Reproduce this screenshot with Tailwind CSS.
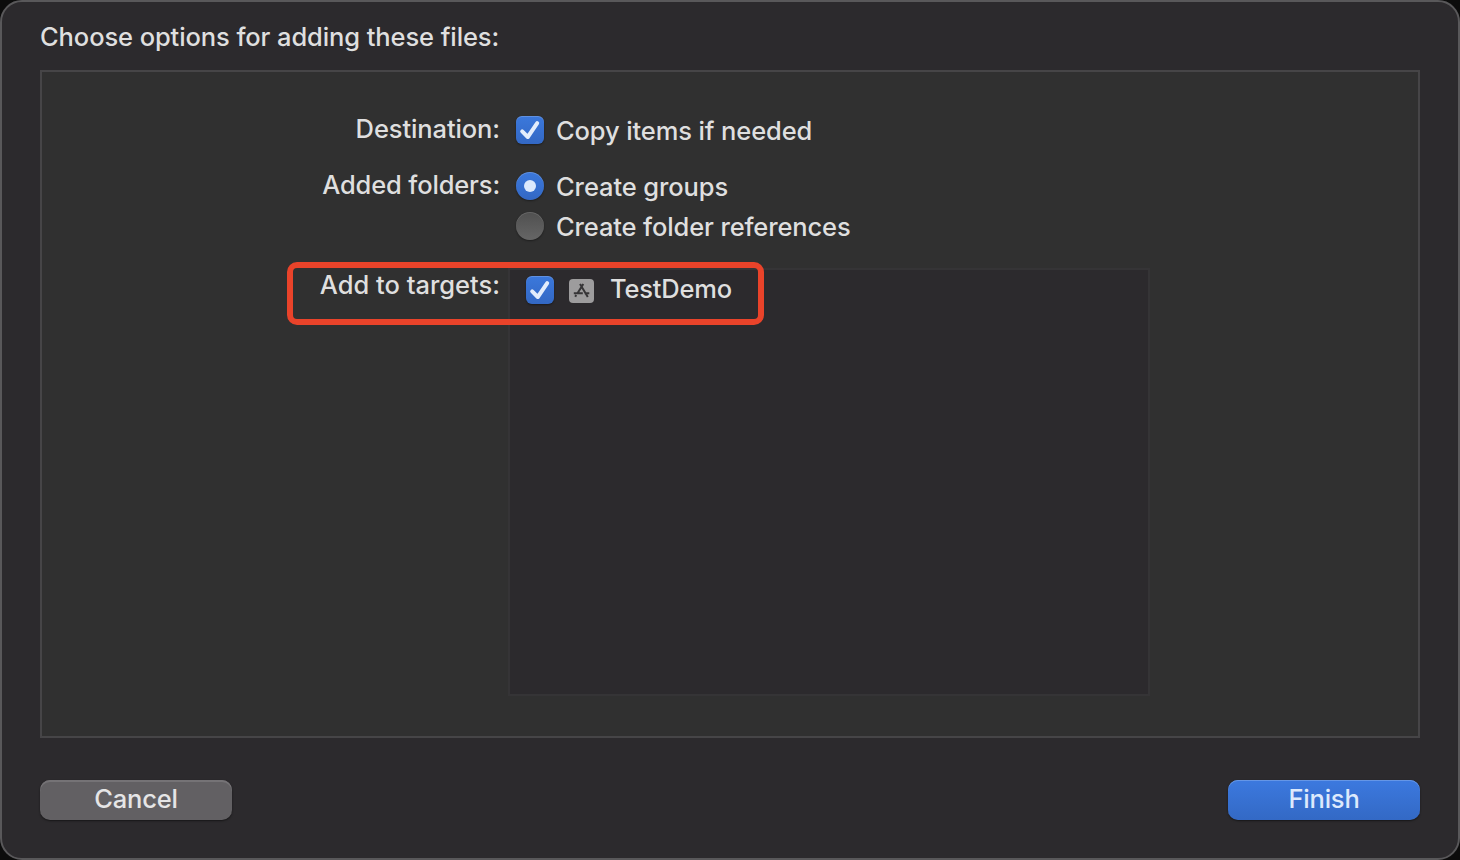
<!DOCTYPE html>
<html lang="en">
<head>
<meta charset="utf-8">
<title>Choose options for adding these files</title>
<script src="https://cdn.jsdelivr.net/npm/@tailwindcss/browser@4"></script>
</head>
<body class="w-[1460px] h-[860px] overflow-hidden bg-[#0c0c0c] font-['Inter',sans-serif] font-[450] text-[25.5px] leading-[40px] text-[#dfdfdf] whitespace-nowrap">
<main class="relative w-full h-full flex flex-col rounded-[22px] border-2 border-[#59585a] bg-[#2c2a2d] px-[38px]">
  <h1 class="mt-[15px] h-[40px] font-[450]"><span class="tracking-[-0.1px]">Choose options for adding these files:</span></h1>
  <section class="mt-[13px] h-[668px] border-2 border-[#464547] bg-[#303030] pt-[38px]">
    <div class="flex h-[40px]">
      <div class="w-[458px] -mt-[1px] text-right"><span class="tracking-[-0.1px]">Destination:</span></div>
      <label class="ml-[16px] flex items-center">
        <svg class="w-7 h-7 rounded-[6px] bg-linear-to-b from-[#3b78dc] to-[#3368c4] shadow-[0_1px_2px_#00000066,inset_0_1px_0_#ffffff30]" viewBox="0 0 28 28" fill="none"><path d="M6.2 15.4l5.6 5.6L21.2 7.2" stroke="#e3edfc" stroke-width="4" stroke-linecap="round" stroke-linejoin="round"/></svg>
        <span class="ml-3 mt-[2px] tracking-[-0.12px]">Copy items if needed</span>
      </label>
    </div>
    <div class="mt-4 flex h-[40px]">
      <div class="w-[458px] -mt-[1px] text-right"><span class="tracking-[-0.15px]">Added folders:</span></div>
      <label class="ml-[16px] flex items-center">
        <i class="w-7 h-7 rounded-full flex items-center justify-center bg-linear-to-b from-[#3b78dc] to-[#3368c4] shadow-[0_1px_2px_#00000066,inset_0_1px_0_#ffffff30]"><b class="w-3 h-3 rounded-full bg-[#dce9fc]"></b></i>
        <span class="ml-3 mt-[2px] tracking-[-0.1px]">Create groups</span>
      </label>
    </div>
    <div class="flex h-[40px] pl-[474px]">
      <label class="flex items-center">
        <i class="w-7 h-7 rounded-full bg-linear-to-b from-[#505050] to-[#666666] shadow-[0_1px_2px_#00000066,inset_0_1px_0_#ffffff20]"></i>
        <span class="ml-3 mt-[2px] tracking-[-0.13px]">Create folder references</span>
      </label>
    </div>
    <div class="mt-[22px] flex">
      <div class="w-[458px] -mt-[3px] text-right"><span class="tracking-[0px]">Add to targets:</span></div>
      <div class="ml-[8px] w-[642px] h-[428px] border-2 border-[#353436] bg-[#2c2a2d]">
        <div class="flex items-center h-[40px] pl-4">
          <svg class="w-7 h-7 rounded-[6px] bg-linear-to-b from-[#3b78dc] to-[#3368c4] shadow-[0_1px_2px_#00000066,inset_0_1px_0_#ffffff30]" viewBox="0 0 28 28" fill="none"><path d="M6.2 15.4l5.6 5.6L21.2 7.2" stroke="#e3edfc" stroke-width="4" stroke-linecap="round" stroke-linejoin="round"/></svg>
          <svg class="ml-[15px] mt-[2px] w-[25px] h-[24px]" viewBox="0 0 25 24" fill="none" stroke="#363537" stroke-width="2"><rect width="25" height="24" rx="4" fill="#9d9c9d" stroke="none"/><path d="M11 5l7.8 13M14.3 5L8.5 14.3M7.2 16l-1 1.8M4.8 14.2h9M15.6 14.2h4.7"/></svg>
          <span class="ml-[16px] -mt-[2px] tracking-[-0.2px]">TestDemo</span>
        </div>
      </div>
    </div>
  </section>
  <footer class="mt-[42px] flex justify-between">
    <button class="w-[192px] h-[40px] rounded-[10px] bg-[#626063] shadow-[0_1px_2px_#00000080,inset_0_2px_0_#757376] leading-[38px] text-[#e5e5e6] pb-[2px]"><span class="tracking-[-0.2px]">Cancel</span></button>
    <button class="w-[192px] h-[40px] rounded-[10px] bg-linear-to-b from-[#3c79df] to-[#3369c5] shadow-[0_1px_2px_#00000080,inset_0_1px_0_#6596e6] leading-[38px] text-[#dce9fc] pb-[2px]"><span class="tracking-[-0.2px]">Finish</span></button>
  </footer>
  <div class="absolute left-[285px] top-[260px] w-[477px] h-[62.5px] rounded-[10px] border-6 border-[#e9432a]"></div>
</main>
</body>
</html>
